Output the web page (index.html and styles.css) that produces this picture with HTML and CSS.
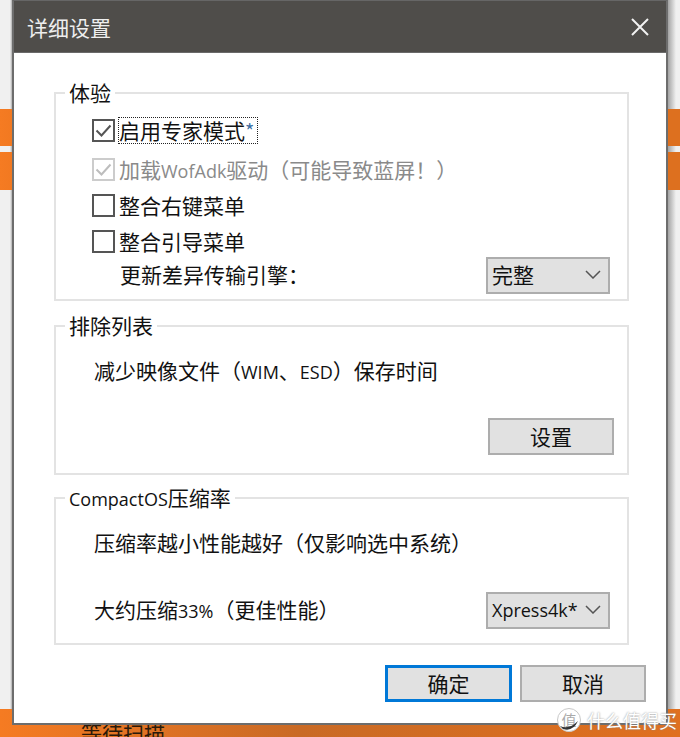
FILE: index.html
```html
<!DOCTYPE html>
<html lang="zh-CN">
<head>
    <meta charset="UTF-8">
    <meta name="viewport" content="width=device-width, initial-scale=1.0">
    <title>详细设置</title>
    <link rel="stylesheet" href="styles.css">
</head>
<body>
    <!-- Window behind the dialog -->
    <div class="backdrop">
        <div class="stripe stripe-one"></div>
        <div class="stripe stripe-two"></div>
        <div class="stripe-bottom"><span class="scan-text">等待扫描</span></div>
    </div>

    <div class="dialog">
        <div class="title-bar">
            <span class="title-text">详细设置</span>
            <svg class="close-icon" width="20" height="20" viewBox="0 0 20 20">
                <path d="M2 2 L18 18 M18 2 L2 18" stroke="#f2f2f2" stroke-width="2" fill="none"/>
            </svg>
        </div>

        <div class="dialog-body">
            <fieldset class="group group-experience">
                <legend>体验</legend>
                <div class="group-body">
                    <div class="row row-first">
                        <svg class="check" width="23" height="23" viewBox="0 0 23 23">
                            <rect x="1" y="1" width="21" height="21" fill="#fff" stroke="#555" stroke-width="2"/>
                            <path d="M4.5 11.5 L9.5 16.5 L18.5 6.5" stroke="#555" stroke-width="2" fill="none"/>
                        </svg>
                        <span class="focus-label">启用专家模式<span class="star">*</span></span>
                    </div>
                    <div class="row row-disabled">
                        <svg class="check" width="23" height="23" viewBox="0 0 23 23">
                            <rect x="1" y="1" width="21" height="21" fill="#fff" stroke="#ccc" stroke-width="2"/>
                            <path d="M4.5 11.5 L9.5 16.5 L18.5 6.5" stroke="#bdbdbd" stroke-width="2" fill="none"/>
                        </svg>
                        <span class="label">加载<span class="latin">WofAdk</span>驱动（可能导致蓝屏！）</span>
                    </div>
                    <div class="row">
                        <svg class="check" width="23" height="23" viewBox="0 0 23 23">
                            <rect x="1" y="1" width="21" height="21" fill="#fff" stroke="#555" stroke-width="2"/>
                        </svg>
                        <span class="label">整合右键菜单</span>
                    </div>
                    <div class="row">
                        <svg class="check" width="23" height="23" viewBox="0 0 23 23">
                            <rect x="1" y="1" width="21" height="21" fill="#fff" stroke="#555" stroke-width="2"/>
                        </svg>
                        <span class="label">整合引导菜单</span>
                    </div>
                    <div class="row row-engine">
                        <span class="label">更新差异传输引擎：</span>
                        <div class="select">
                            <span>完整</span>
                            <svg width="16" height="9" viewBox="0 0 16 9">
                                <path d="M1 1 L8 8 L15 1" stroke="#555" stroke-width="1.5" fill="none"/>
                            </svg>
                        </div>
                    </div>
                </div>
            </fieldset>

            <fieldset class="group group-exclude">
                <legend>排除列表</legend>
                <div class="group-body">
                    <div class="desc">减少映像文件（<span class="latin">WIM</span>、<span class="latin">ESD</span>）保存时间</div>
                    <div class="button-row">
                        <div class="button">设置</div>
                    </div>
                </div>
            </fieldset>

            <fieldset class="group group-compact">
                <legend><span class="latin">CompactOS</span>压缩率</legend>
                <div class="group-body">
                    <div class="desc">压缩率越小性能越好（仅影响选中系统）</div>
                    <div class="row-ratio">
                        <span class="ratio-text">大约压缩<span class="latin">33%</span>（更佳性能）</span>
                        <div class="select">
                            <span class="latin">Xpress4k*</span>
                            <svg width="16" height="9" viewBox="0 0 16 9">
                                <path d="M1 1 L8 8 L15 1" stroke="#555" stroke-width="1.5" fill="none"/>
                            </svg>
                        </div>
                    </div>
                </div>
            </fieldset>

            <div class="footer">
                <div class="button button-primary">确定</div>
                <div class="button">取消</div>
            </div>
        </div>
    </div>

    <div class="watermark">
        <svg width="26" height="26" viewBox="0 0 26 26">
            <circle cx="13" cy="13" r="11.5" fill="#fff" stroke="#c8c8c8" stroke-width="1"/>
            <text x="13" y="19" text-anchor="middle" class="logo-char">值</text>
            <path d="M4 19 Q13 23 22 14 Q17 25 7 22 Z" fill="#333"/>
        </svg>
        <span class="mark-text">什么值得买</span>
    </div>
</body>
</html>
```

FILE: styles.css
```css
* {
    box-sizing: border-box;
}
body {
    margin: 0;
    width: 680px;
    height: 737px;
    overflow: hidden;
    position: relative;
    font-family: "Noto Sans CJK SC", sans-serif;
    font-size: 21px;
    color: #111;
    background: linear-gradient(to right, #f0f0f0 0, #f0f0f0 10px, #b0b0b0 12px, #b0b0b0 667px, #9a9a9a 667px, #f0f0f0 676px);
}
.latin {
    font-family: "Open Sans", sans-serif;
    font-size: 18px;
}

/* backdrop */
.stripe {
    position: absolute;
    left: 0;
    width: 680px;
    background: linear-gradient(to right, #f57b22, #f07820 20px, #dd701f 670px);
}
.stripe-one {
    top: 109px;
    height: 37px;
}
.stripe-two {
    top: 152px;
    height: 38px;
}
.stripe-bottom {
    position: absolute;
    left: 0;
    top: 709px;
    width: 680px;
    height: 28px;
    background: linear-gradient(to right, #f57b22, #c96a25 300px, #e0701f 680px);
}
.scan-text {
    position: absolute;
    left: 81px;
    top: 8px;
    font-size: 21px;
    line-height: 30px;
    color: #2a1a0a;
}

/* dialog */
.dialog {
    position: absolute;
    left: 12px;
    top: 0;
    width: 656px;
    height: 725px;
    background: #fff;
    border: 2px solid #6d6d6d;
    border-top: 1px solid #666;
    display: flex;
    flex-direction: column;
}
.title-bar {
    height: 52px;
    background: #4f4d4a;
    border-bottom: 1px solid #6a6a6a;
    display: flex;
    align-items: center;
    justify-content: space-between;
    padding: 0 16px 0 13px;
    color: #eee;
}
.dialog-body {
    flex: 1;
    padding: 26px 36px 0 40px;
    display: flex;
    flex-direction: column;
}

.group {
    margin: 0;
    padding: 0;
    border: 2px solid #e3e3e3;
    width: 575px;
}
.group legend {
    margin-left: 9px;
    padding: 0 4px;
    height: 28px;
    line-height: 26px;
}
.group-experience {
    height: 222px;
}
.group-experience .group-body {
    padding: 5px 17px 0 36px;
}
.group-exclude {
    height: 163px;
    margin-top: 11px;
}
.group-exclude .group-body {
    padding: 15px 13px 0 38px;
}
.group-compact {
    height: 161px;
    margin-top: 9px;
}
.group-compact .group-body {
    padding: 15px 17px 0 38px;
}

.row {
    display: flex;
    align-items: center;
    height: 36px;
}
.row-first {
    margin-bottom: 3px;
}
.row-disabled .label,
.row-disabled .latin {
    color: #8a8a8a;
}
.check {
    flex: none;
    margin-right: 3px;
}
.label {
    padding: 0 1px;
}
.focus-label {
    border: 1px dotted #222;
    line-height: 25px;
    padding: 0 3px 0 0;
}
.star {
    color: #3d6fa5;
    font-size: 20px;
}
.row-engine {
    justify-content: space-between;
    padding-left: 27px;
    margin-top: -2px;
}
.row-engine .label {
    padding-bottom: 2px;
}

.select {
    width: 124px;
    height: 37px;
    background: #e1e1e1;
    border: 2px solid #adadad;
    display: flex;
    align-items: center;
    justify-content: space-between;
    padding: 0 7px 2px 4px;
    color: #111;
}

.desc {
    height: 30px;
    line-height: 30px;
}
.button-row {
    display: flex;
    justify-content: flex-end;
    margin-top: 33px;
}
.row-ratio {
    display: flex;
    align-items: center;
    justify-content: space-between;
    margin-top: 35px;
}
.ratio-text {
    padding-bottom: 4px;
}

.button {
    width: 126px;
    height: 37px;
    background: #e1e1e1;
    border: 2px solid #adadad;
    display: flex;
    align-items: center;
    justify-content: center;
    line-height: 30px;
    padding-bottom: 2px;
}
.button-primary {
    width: 127px;
    border: 3px solid #0078d7;
}
.footer {
    display: flex;
    justify-content: flex-end;
    gap: 8px;
    margin: 20px -16px 0 0;
}

/* site watermark over the corner */
.watermark {
    position: absolute;
    left: 556px;
    top: 707px;
    display: flex;
    align-items: center;
    gap: 5px;
    color: #fff;
    font-size: 18px;
    line-height: 26px;
}
.logo-char {
    font-size: 15px;
    fill: #aaa;
}
.mark-text {
    text-shadow: 0 0 2px #888;
}
```
